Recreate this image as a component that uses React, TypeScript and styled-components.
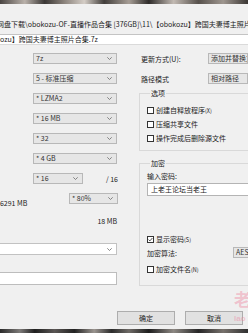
import React from "react";
import styled, { createGlobalStyle } from "styled-components";

const GlobalStyle = createGlobalStyle`
  html, body {
    margin: 0;
    padding: 0;
    background: #f0f0f0;
  }
`;

const Frame = styled.div`
  position: relative;
  width: 248px;
  height: 333px;
  overflow: hidden;
  background: #f0f0f0;
  display: flex;
  flex-direction: column;
  font-family: "Noto Sans CJK SC", "Noto Sans", sans-serif;
  font-size: 7px;
  line-height: 10px;
  color: #1c1c1c;
`;

const PhotoStrip = styled.div<{ $bottom?: boolean }>`
  height: 4px;
  flex-shrink: 0;
  margin-top: ${(p) => (p.$bottom ? "auto" : "0")};
  background: ${(p) =>
    p.$bottom
      ? "linear-gradient(90deg, #2a2a2a 0%, #7d7a78 8%, #1f1f1f 14%, #5a5654 22%, #222 30%, #9a948f 38%, #2b2b2b 45%, #6e6a66 52%, #1d1d1d 60%, #8d8883 70%, #262626 80%, #77716c 90%, #303030 100%)"
      : "linear-gradient(90deg, #4a4542 0%, #b9b1aa 10%, #3b3735 18%, #8c847d 26%, #d4cdc6 34%, #423e3b 42%, #a69d95 52%, #2f2c2a 60%, #c2bab3 70%, #57514c 80%, #9e968f 90%, #3a3633 100%)"};
`;

const PathText = styled.div`
  margin-top: 15px;
  margin-left: -3px;
  height: 10px;
  white-space: nowrap;
`;

const NameBox = styled.div`
  margin-top: 5px;
  height: 11px;
  box-sizing: border-box;
  background: #fff;
  border-top: 1px solid #c4c4c4;
  border-bottom: 1px solid #dadada;
  line-height: 9px;
  white-space: nowrap;
`;

const Main = styled.div`
  margin-top: 8px;
  display: grid;
  grid-template-columns: 118px 1fr;
  column-gap: 21px;
`;

const LeftCol = styled.div`
  display: flex;
  flex-direction: column;
`;

const ComboStack = styled.div`
  display: flex;
  flex-direction: column;
  gap: 9px;
`;

const Combo = styled.div<{ $width: number; $left?: number; $white?: boolean; $height?: number }>`
  display: flex;
  align-items: center;
  justify-content: space-between;
  box-sizing: border-box;
  flex-shrink: 0;
  width: ${(p) => p.$width}px;
  height: ${(p) => p.$height ?? 11}px;
  margin-left: ${(p) => p.$left ?? 0}px;
  padding: 0 4px 0 2px;
  background: ${(p) => (p.$white ? "#fff" : "#e6e6e6")};
  border: 1px solid ${(p) => (p.$white ? "#c2c2c2" : "#b8b8b8")};
  color: #333;
  line-height: 9px;
  white-space: nowrap;
  overflow: hidden;
`;

const Chevron = () => (
  <svg width="5" height="3" viewBox="0 0 5 3">
    <polyline points="0.3,0.3 2.5,2.5 4.7,0.3" fill="none" stroke="#6a6a6a" strokeWidth="0.8" />
  </svg>
);

const ThreadRow = styled.div`
  display: flex;
  align-items: center;
  justify-content: space-between;
`;

const MemoryRow = styled.div`
  display: flex;
  align-items: flex-start;
  justify-content: space-between;
`;

const MemoryText = styled.span`
  padding-top: 5px;
  margin-left: -4px;
`;

const DecompText = styled.div`
  margin-top: 8px;
  text-align: right;
  padding-right: 1px;
`;

const WideCombo = styled(Combo)`
  margin-top: 17px;
  margin-left: -2px;
`;

const ParamBox = styled.div`
  margin-top: 17px;
  margin-left: -2px;
  width: 119px;
  height: 13px;
  box-sizing: border-box;
  background: #fff;
  border: 1px solid #bdbdbd;
`;

const RightCol = styled.div`
  display: flex;
  flex-direction: column;
  min-width: 0;
`;

const SettingRow = styled.div`
  display: flex;
  align-items: center;
  height: 11px;
  padding-left: 2px;
  & + & {
    margin-top: 9px;
  }
`;

const SettingLabel = styled.span`
  width: 77px;
  white-space: nowrap;
`;

const Group = styled.fieldset<{ $top: number; $padTop: number; $padBottom: number }>`
  margin: ${(p) => p.$top}px 0 0 0;
  padding: ${(p) => p.$padTop}px 0 ${(p) => p.$padBottom}px 7px;
  width: 125px;
  box-sizing: border-box;
  border: 1px solid #d9d9d9;
  min-width: 0;
`;

const Legend = styled.legend`
  padding: 0 1px;
  margin-left: 3px;
  line-height: 8px;
  height: 8px;
`;

const CheckRow = styled.div<{ $gap?: number }>`
  display: flex;
  align-items: center;
  gap: 2px;
  height: 10px;
  white-space: nowrap;
  margin-top: ${(p) => p.$gap ?? 0}px;
`;

const Box = styled.span`
  width: 7px;
  height: 7px;
  box-sizing: border-box;
  border: 1px solid #333;
  background: #fff;
  display: flex;
  align-items: center;
  justify-content: center;
`;

const Small = styled.span`
  font-size: 5.5px;
`;

const Check = ({ on }: { on?: boolean }) => (
  <Box>
    {on && (
      <svg width="5" height="5" viewBox="0 0 5 5">
        <polyline points="0.6,2.6 1.9,3.9 4.4,1" fill="none" stroke="#222" strokeWidth="0.8" />
      </svg>
    )}
  </Box>
);

const FieldLabel = styled.div<{ $gap?: number }>`
  height: 10px;
  margin-top: ${(p) => p.$gap ?? 0}px;
  white-space: nowrap;
`;

const PasswordBox = styled.div`
  margin-top: 2px;
  height: 13px;
  box-sizing: border-box;
  background: #fff;
  border: 1px solid #b4b4b4;
  border-right: none;
  padding-left: 3px;
  line-height: 11px;
  white-space: nowrap;
`;

const AlgoRow = styled.div`
  display: flex;
  align-items: center;
  margin-top: 3px;
  height: 11px;
`;

const AlgoLabel = styled.span`
  width: 94px;
  white-space: nowrap;
`;

const ButtonRow = styled.div`
  margin-top: 25px;
  display: flex;
  gap: 10px;
  padding-left: 117px;
`;

const DialogButton = styled.div`
  width: 58px;
  height: 14px;
  flex-shrink: 0;
  box-sizing: border-box;
  background: #e1e1e1;
  border: 1px solid #adadad;
  display: flex;
  align-items: center;
  justify-content: center;
`;

const Watermark = styled.div`
  position: absolute;
  right: -3px;
  top: 289px;
  display: flex;
  flex-direction: column;
  align-items: flex-start;
  color: rgba(238, 120, 150, 0.4);
  pointer-events: none;
`;

const WatermarkChar = styled.span`
  font-size: 17px;
  line-height: 20px;
  font-weight: bold;
`;

const WatermarkLatin = styled.span`
  margin-top: 6px;
  font-family: "Liberation Sans", sans-serif;
  font-size: 8px;
  line-height: 8px;
  font-weight: bold;
`;

export default function App() {
  return (
    <>
      <GlobalStyle />
      <Frame>
        <PhotoStrip />
        <PathText>
          网盘下载\obokozu-OF-直播作品合集 [376GB]\11\【obokozu】跨国夫妻博主照片合集\
        </PathText>
        <NameBox>ozu】跨国夫妻博主照片合集.7z</NameBox>
        <Main>
          <LeftCol>
            <ComboStack>
              <Combo $width={84} $left={33}>7z<Chevron /></Combo>
              <Combo $width={84} $left={33}>5 - 标准压缩<Chevron /></Combo>
              <Combo $width={84} $left={33}>* LZMA2<Chevron /></Combo>
              <Combo $width={84} $left={33}>* 16 MB<Chevron /></Combo>
              <Combo $width={84} $left={33}>* 32<Chevron /></Combo>
              <Combo $width={84} $left={33}>* 4 GB<Chevron /></Combo>
              <ThreadRow>
                <Combo $width={50} $left={33}>* 16<Chevron /></Combo>
                <span>/ 16</span>
              </ThreadRow>
              <MemoryRow>
                <MemoryText>16291 MB</MemoryText>
                <Combo $width={49}>* 80%<Chevron /></Combo>
              </MemoryRow>
            </ComboStack>
            <DecompText>18 MB</DecompText>
            <WideCombo $width={119} $height={12} $white>
              <span />
              <Chevron />
            </WideCombo>
            <ParamBox />
          </LeftCol>
          <RightCol>
            <SettingRow>
              <SettingLabel>更新方式(U):</SettingLabel>
              <Combo $width={40}>添加并替换文件</Combo>
            </SettingRow>
            <SettingRow>
              <SettingLabel>路径模式</SettingLabel>
              <Combo $width={40}>相对路径</Combo>
            </SettingRow>
            <Group $top={5} $padTop={8} $padBottom={7}>
              <Legend>选项</Legend>
              <CheckRow>
                <Check />
                <span>创建自释放程序<Small>(X)</Small></span>
              </CheckRow>
              <CheckRow $gap={4}>
                <Check />
                <span>压缩共享文件</span>
              </CheckRow>
              <CheckRow $gap={4}>
                <Check />
                <span>操作完成后删除源文件</span>
              </CheckRow>
            </Group>
            <Group $top={8} $padTop={4} $padBottom={11}>
              <Legend>加密</Legend>
              <FieldLabel>输入密码:</FieldLabel>
              <PasswordBox>上老王论坛当老王</PasswordBox>
              <CheckRow $gap={38}>
                <Check on />
                <span>显示密码<Small>(S)</Small></span>
              </CheckRow>
              <AlgoRow>
                <AlgoLabel>加密算法:</AlgoLabel>
                <Combo $width={30}>AES-256</Combo>
              </AlgoRow>
              <CheckRow $gap={6}>
                <Check />
                <span>加密文件名<Small>(N)</Small></span>
              </CheckRow>
            </Group>
          </RightCol>
        </Main>
        <ButtonRow>
          <DialogButton>确定</DialogButton>
          <DialogButton>取消</DialogButton>
        </ButtonRow>
        <PhotoStrip $bottom />
        <Watermark>
          <WatermarkChar>老</WatermarkChar>
          <WatermarkLatin>lao</WatermarkLatin>
        </Watermark>
      </Frame>
    </>
  );
}
